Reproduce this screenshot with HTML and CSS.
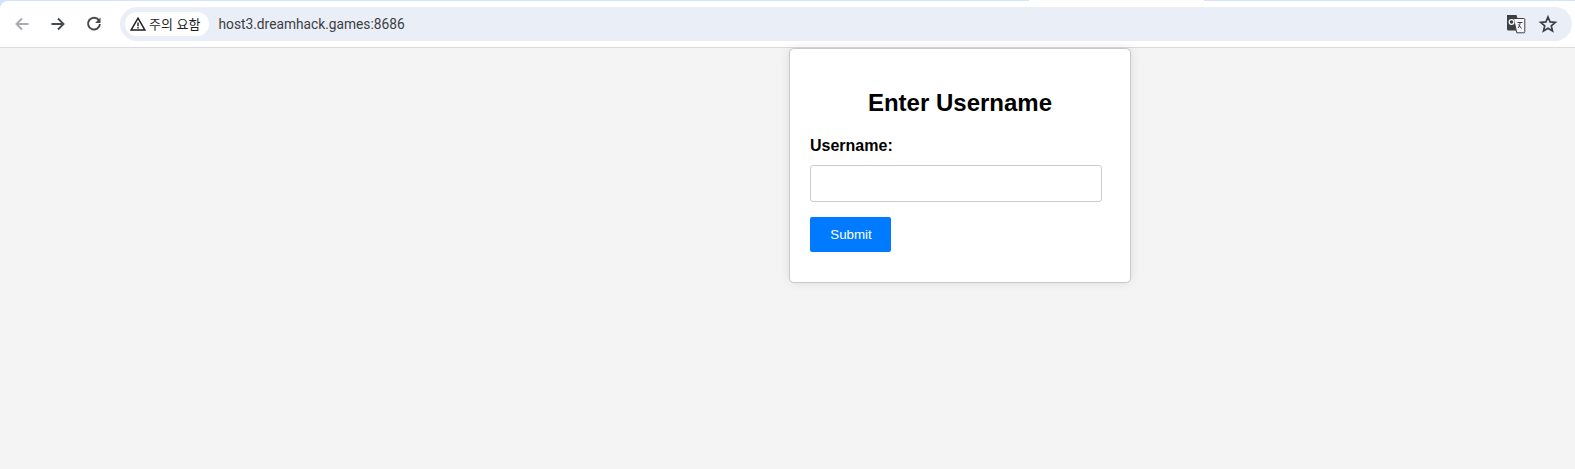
FILE: index.html
```html
<!DOCTYPE html>
<html lang="ko">
<head>
<meta charset="utf-8">
<title>Enter Username</title>
<link rel="stylesheet" href="styles.css">
</head>
<body>
<header class="chrome">
  <div class="tabstrip">
    <span class="strip strip-a"></span>
    <span class="strip-gap"></span>
    <span class="strip strip-b"></span>
  </div>
  <div class="toolbar">
    <div class="nav">
      <svg class="nav-icon muted" width="24" height="24" viewBox="0 0 24 24"><path d="M18.500 12H7M12 6.500L6.500 12l5.500 5.500" fill="none" stroke="currentColor" stroke-width="1.900"/></svg>
      <svg class="nav-icon" width="24" height="24" viewBox="0 0 24 24"><path d="M5.500 12H17M12 6.500l5.500 5.500-5.500 5.500" fill="none" stroke="currentColor" stroke-width="1.900"/></svg>
      <svg class="nav-icon" width="24" height="24" viewBox="0 0 24 24"><path d="M16.900 8.300A5.900 5.900 0 1 0 17.900 12" fill="none" stroke="currentColor" stroke-width="2"/><path d="M18.500 5.600v5.400h-5.400z" fill="currentColor"/></svg>
    </div>
    <div class="omnibox">
      <div class="chip">
        <svg width="16" height="16" viewBox="0 0 16 16"><path d="M8 2.200L14.800 14H1.200z" fill="none" stroke="currentColor" stroke-width="1.500" stroke-linejoin="miter"/><path d="M7.300 6.500h1.400v3.800H7.300zM7.300 11h1.400v1.400H7.300z" fill="currentColor"/></svg>
        <span class="chip-text">주의 요함</span>
      </div>
      <span class="url">host3.dreamhack.games:8686</span>
      <div class="actions">
        <svg class="translate" width="20" height="20" viewBox="0 0 20 20">
          <path d="M1 1h9.500l5 15.500H2.500A1.500 1.500 0 0 1 1 15z" fill="#3c4043"/>
          <path d="M7.500 4.500h10.300a1 1 0 0 1 1 1v12.300a1 1 0 0 1-1 1h-7z" fill="#f4f5fb" stroke="#3c4043" stroke-width="1"/>
          <circle cx="5.500" cy="8" r="2.400" fill="none" stroke="#fff" stroke-width="1.200"/>
          <path d="M11.500 8.500h5M14 8v1c0 2-1 4-2 5M12.500 10.500l3 4" fill="none" stroke="#3c4043" stroke-width="1"/>
        </svg>
        <svg class="star" width="20" height="20" viewBox="0 0 20 20"><path d="M10 3l2.050 4.950 5.250.45-4 3.450 1.200 5.150L10 14.250 5.500 17l1.200-5.150-4-3.450 5.250-.45z" fill="none" stroke="#3c4043" stroke-width="1.700"/></svg>
      </div>
    </div>
  </div>
</header>
<main class="page">
  <form class="card">
    <h2 class="title">Enter Username</h2>
    <label class="label" for="username">Username:</label>
    <input class="input" id="username" type="text">
    <button class="submit" type="button">Submit</button>
  </form>
</main>
</body>
</html>
```
FILE: styles.css
```css
* {
  box-sizing: border-box;
}

html,
body {
  margin: 0;
  padding: 0;
  height: 100%;
  overflow: hidden;
}

body {
  display: flex;
  flex-direction: column;
  background: #f4f4f4;
  font-family: "Liberation Sans", Arial, sans-serif;
  color: #000;
}

.chrome {
  height: 48px;
  flex: none;
  background: #d3e3fd;
  border-bottom: 1px solid #dcdcdc;
}

.tabstrip {
  display: flex;
  height: 1px;
}

.strip {
  display: block;
  height: 1px;
  background: #d3e3fd;
}

.strip-a {
  width: 1029px;
}

.strip-gap {
  width: 175px;
  height: 1px;
  background: #fff;
}

.strip-b {
  flex: 1;
}

.toolbar {
  display: flex;
  align-items: center;
  height: 46px;
  padding: 6px 3px 6px 10px;
  background: #fff;
  border-top-left-radius: 8px;
}

.nav {
  display: flex;
  align-items: center;
  gap: 12px;
  width: 110px;
  flex: none;
}

.nav-icon {
  color: #474a4d;
  flex: none;
}

.nav-icon.muted {
  color: #a9abae;
}

.omnibox {
  display: flex;
  align-items: center;
  flex: 1;
  height: 34px;
  padding: 0 14px 0 5px;
  background: #eaeef7;
  border-radius: 17px;
}

.chip {
  display: flex;
  align-items: center;
  gap: 3px;
  height: 24px;
  padding: 0 9px 0 5px;
  background: #fff;
  border-radius: 12px;
  color: #1f1f1f;
}

.chip-text {
  font-family: "Noto Sans CJK KR", "Noto Sans", sans-serif;
  font-size: 13px;
  line-height: 24px;
}

.url {
  margin-left: 9px;
  font-family: Roboto, "Noto Sans", sans-serif;
  font-size: 13.75px;
  color: #3c4043;
}

.actions {
  display: flex;
  align-items: center;
  gap: 12px;
  margin-left: auto;
}

.page {
  flex: 1;
  display: flex;
  align-items: flex-start;
}

.card {
  display: flex;
  flex-direction: column;
  align-items: flex-start;
  width: 342px;
  height: 235px;
  margin-left: 789px;
  padding: 20px;
  background: #fff;
  border: 1px solid #c8c8c8;
  border-radius: 5px;
  box-shadow: 0 0 10px rgba(0, 0, 0, 0.1);
}

.title {
  align-self: stretch;
  margin: 20px 0 0;
  font-size: 24px;
  line-height: 28px;
  font-weight: 700;
  text-align: center;
}

.label {
  margin-top: 20px;
  font-size: 16px;
  line-height: 18px;
  font-weight: 700;
}

.input {
  width: 292px;
  height: 37px;
  margin-top: 10px;
  padding: 8px;
  background: #fff;
  border: 1px solid #ccc;
  border-radius: 3px;
}

.submit {
  width: 81px;
  height: 35px;
  margin-top: 15px;
  padding: 0 0 1px 1px;
  background: #007bff;
  border: 0;
  border-radius: 2px;
  color: #fff;
  font-family: inherit;
  font-size: 13.33px;
  font-weight: 400;
}
```
